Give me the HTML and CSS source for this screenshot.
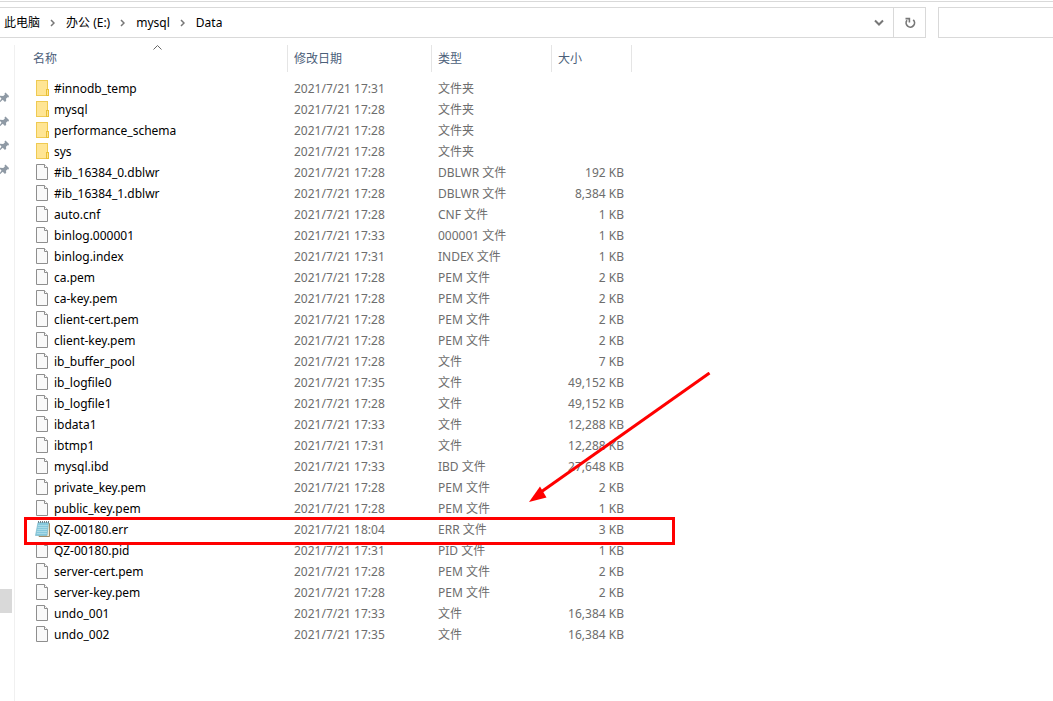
FILE: index.html
```html
<!DOCTYPE html>
<html lang="zh-CN">
<head>
<meta charset="utf-8">
<title>Data</title>
<link rel="stylesheet" href="styles.css">
</head>
<body>
<svg class="sprite" aria-hidden="true">
  <symbol id="folder" viewBox="0 0 15 16">
    <rect x="1.5" y="0.5" width="11" height="15" fill="#ffe594" stroke="#efca52"/>
    <rect x="11.5" y="9.500" width="2" height="6" fill="#ffe594" stroke="#e9c037"/>
  </symbol>
  <symbol id="file" viewBox="0 0 15 16">
    <path d="M1.500 0.500H9.500L12.500 3.500V15.500H1.500Z" fill="#f9f9f9" stroke="#8e8e8e"/>
    <path d="M9.500 0.500V3.500H12.500" fill="#fff" stroke="#8e8e8e"/>
  </symbol>
  <symbol id="notepad" viewBox="0 0 15 16">
    <path d="M5 2.500H14.500V15.500H4Z" fill="#f1ead6" stroke="#a08c68"/>
    <path d="M3 1.500H13.500L12 14.500H0.500Z" fill="#86c8dc" stroke="#7db9ca" stroke-width=".7"/>
    <path d="M3 4.500H12.800M2.700 6.500H12.500M2.400 8.500H12.200M2 10.500H12M1.700 12.500H11.700" stroke="#b4dfea" stroke-width=".8"/>
    <path d="M3.500 0V2M5.500 0V2M7.500 0V2M9.500 0V2M11.500 0V2M13.500 0V2" stroke="#71838b"/>
  </symbol>
  <symbol id="pin" viewBox="0 0 9 11">
    <path d="M5.500 0.500L9 4L8.500 5.500L7.500 5.200L6 6.700L6.200 8.700L5 10L2.700 7.700L0 10.300V8.700L1.500 6.500L0 5V3.700L3.200 4L4.900 2.500L4.500 1.500Z" fill="#8f9aa5"/>
  </symbol>
  <symbol id="chev" viewBox="0 0 5 8">
    <path d="M1 1L4 4L1 7" fill="none" stroke="#777" stroke-width="1.500"/>
  </symbol>
</svg>

<header class="toolbar">
  <nav class="address" aria-label="路径">
    <a class="crumb" href="#">此电脑</a><svg class="chev"><use href="#chev"/></svg>
    <a class="crumb" href="#">办公 (E:)</a><svg class="chev"><use href="#chev"/></svg>
    <a class="crumb" href="#">mysql</a><svg class="chev"><use href="#chev"/></svg>
    <a class="crumb" href="#">Data</a>
    <button class="drop" type="button" aria-label="历史记录"><svg width="10" height="7" viewBox="0 0 10 7"><path d="M1 1.500L5 5.500L9 1.500" fill="none" stroke="#777" stroke-width="2"/></svg></button>
    <button class="refresh" type="button" aria-label="刷新"><svg width="12" height="12" viewBox="0 0 12 12"><path d="M9.200 2.800A4.200 4.200 0 1 1 3 3.300" fill="none" stroke="#777" stroke-width="1.700"/><path d="M1.500 0.800H6.200V5.500H4.600V2.500H1.500Z" fill="#777"/></svg></button>
  </nav>
  <input class="search" type="search" aria-label="搜索">
</header>

<div class="body">
  <aside class="side">
    <svg class="pin"><use href="#pin"/></svg>
    <svg class="pin"><use href="#pin"/></svg>
    <svg class="pin"><use href="#pin"/></svg>
    <svg class="pin"><use href="#pin"/></svg>
    <div class="thumb"></div>
  </aside>
  <main class="files">
    <table class="list">
      <colgroup><col class="c-name"><col class="c-date"><col class="c-type"><col class="c-size"></colgroup>
      <thead>
        <tr><th class="first">名称<svg class="sort" viewBox="0 0 9 5"><path d="M0.500 4.500L4.500 0.500L8.500 4.500" fill="none" stroke="#666"/></svg></th><th>修改日期</th><th>类型</th><th>大小</th></tr>
      </thead>
      <tbody>
        <tr><td><svg class="ico"><use href="#folder"/></svg>#innodb_temp</td><td>2021/7/21 17:31</td><td>文件夹</td><td></td></tr>
        <tr><td><svg class="ico"><use href="#folder"/></svg>mysql</td><td>2021/7/21 17:28</td><td>文件夹</td><td></td></tr>
        <tr><td><svg class="ico"><use href="#folder"/></svg>performance_schema</td><td>2021/7/21 17:28</td><td>文件夹</td><td></td></tr>
        <tr><td><svg class="ico"><use href="#folder"/></svg>sys</td><td>2021/7/21 17:28</td><td>文件夹</td><td></td></tr>
        <tr><td><svg class="ico"><use href="#file"/></svg>#ib_16384_0.dblwr</td><td>2021/7/21 17:28</td><td>DBLWR 文件</td><td>192 KB</td></tr>
        <tr><td><svg class="ico"><use href="#file"/></svg>#ib_16384_1.dblwr</td><td>2021/7/21 17:28</td><td>DBLWR 文件</td><td>8,384 KB</td></tr>
        <tr><td><svg class="ico"><use href="#file"/></svg>auto.cnf</td><td>2021/7/21 17:28</td><td>CNF 文件</td><td>1 KB</td></tr>
        <tr><td><svg class="ico"><use href="#file"/></svg>binlog.000001</td><td>2021/7/21 17:33</td><td>000001 文件</td><td>1 KB</td></tr>
        <tr><td><svg class="ico"><use href="#file"/></svg>binlog.index</td><td>2021/7/21 17:31</td><td>INDEX 文件</td><td>1 KB</td></tr>
        <tr><td><svg class="ico"><use href="#file"/></svg>ca.pem</td><td>2021/7/21 17:28</td><td>PEM 文件</td><td>2 KB</td></tr>
        <tr><td><svg class="ico"><use href="#file"/></svg>ca-key.pem</td><td>2021/7/21 17:28</td><td>PEM 文件</td><td>2 KB</td></tr>
        <tr><td><svg class="ico"><use href="#file"/></svg>client-cert.pem</td><td>2021/7/21 17:28</td><td>PEM 文件</td><td>2 KB</td></tr>
        <tr><td><svg class="ico"><use href="#file"/></svg>client-key.pem</td><td>2021/7/21 17:28</td><td>PEM 文件</td><td>2 KB</td></tr>
        <tr><td><svg class="ico"><use href="#file"/></svg>ib_buffer_pool</td><td>2021/7/21 17:28</td><td>文件</td><td>7 KB</td></tr>
        <tr><td><svg class="ico"><use href="#file"/></svg>ib_logfile0</td><td>2021/7/21 17:35</td><td>文件</td><td>49,152 KB</td></tr>
        <tr><td><svg class="ico"><use href="#file"/></svg>ib_logfile1</td><td>2021/7/21 17:28</td><td>文件</td><td>49,152 KB</td></tr>
        <tr><td><svg class="ico"><use href="#file"/></svg>ibdata1</td><td>2021/7/21 17:33</td><td>文件</td><td>12,288 KB</td></tr>
        <tr><td><svg class="ico"><use href="#file"/></svg>ibtmp1</td><td>2021/7/21 17:31</td><td>文件</td><td>12,288 KB</td></tr>
        <tr><td><svg class="ico"><use href="#file"/></svg>mysql.ibd</td><td>2021/7/21 17:33</td><td>IBD 文件</td><td>27,648 KB</td></tr>
        <tr><td><svg class="ico"><use href="#file"/></svg>private_key.pem</td><td>2021/7/21 17:28</td><td>PEM 文件</td><td>2 KB</td></tr>
        <tr><td><svg class="ico"><use href="#file"/></svg>public_key.pem</td><td>2021/7/21 17:28</td><td>PEM 文件</td><td>1 KB</td></tr>
        <tr class="marked"><td><svg class="ico"><use href="#notepad"/></svg>QZ-00180.err<span class="frame"></span><svg class="arrow" viewBox="0 0 182 130"><path d="M180.500 1L12 120" stroke="#f00" stroke-width="3" fill="none"/><path d="M0 130L11 114.500L17.500 125.500Z" fill="#f00"/></svg></td><td>2021/7/21 18:04</td><td>ERR 文件</td><td>3 KB</td></tr>
        <tr><td><svg class="ico"><use href="#file"/></svg>QZ-00180.pid</td><td>2021/7/21 17:31</td><td>PID 文件</td><td>1 KB</td></tr>
        <tr><td><svg class="ico"><use href="#file"/></svg>server-cert.pem</td><td>2021/7/21 17:28</td><td>PEM 文件</td><td>2 KB</td></tr>
        <tr><td><svg class="ico"><use href="#file"/></svg>server-key.pem</td><td>2021/7/21 17:28</td><td>PEM 文件</td><td>2 KB</td></tr>
        <tr><td><svg class="ico"><use href="#file"/></svg>undo_001</td><td>2021/7/21 17:33</td><td>文件</td><td>16,384 KB</td></tr>
        <tr><td><svg class="ico"><use href="#file"/></svg>undo_002</td><td>2021/7/21 17:35</td><td>文件</td><td>16,384 KB</td></tr>
      </tbody>
    </table>
  </main>
</div>
</body>
</html>
```

FILE: styles.css
```css
* { box-sizing: border-box; }
body {
  margin: 0;
  min-height: 100vh;
  display: flex;
  flex-direction: column;
  background: #fff;
  color: #000;
  font: 12px/20px "Noto Sans", "Noto Sans CJK SC", sans-serif;
  overflow-x: hidden;
}
.sprite { position: absolute; width: 0; height: 0; }

.toolbar {
  display: flex;
  gap: 12px;
  margin-top: 1px;
  padding-top: 5px;
  border-top: 1px solid #d9d9d9;
}
.address {
  flex: 1;
  display: flex;
  align-items: center;
  height: 31px;
  padding-left: 4px;
  border: 1px solid #d9d9d9;
  border-left: 0;
}
.crumb { color: #000; text-decoration: none; white-space: nowrap; }
.chev { width: 5px; height: 8px; margin: 0 11px 0 10px; }
.address button {
  display: flex;
  align-items: center;
  justify-content: center;
  align-self: stretch;
  width: 28px;
  padding: 0;
  border: 0;
  background: none;
}
.address .drop { margin-left: auto; }
.address .refresh { width: 32px; border-left: 1px solid #d9d9d9; }
.search {
  width: 115px;
  height: 31px;
  padding: 0 8px;
  border: 1px solid #d9d9d9;
  border-right: 0;
  border-radius: 0;
  background: #fff;
  font: inherit;
  appearance: none;
}

.body { flex: 1; display: flex; margin-top: 7px; }
.side {
  width: 15px;
  padding-top: 47px;
  border-right: 1px solid #f0f0f0;
}
.pin { display: block; width: 9px; height: 11px; margin-bottom: 13px; }
.thumb { width: 12px; height: 24px; margin-top: 414px; background: #d9d9d9; }

.files { flex: 1; }
.list { width: 617px; table-layout: fixed; border-collapse: separate; border-spacing: 0; }
.c-name { width: 273px; }
.c-date { width: 144px; }
.c-type { width: 120px; }
.c-size { width: 80px; }
th {
  position: relative;
  height: 27px;
  padding: 0 6px;
  border-right: 1px solid #e5e5e5;
  color: #4c607a;
  font-weight: 400;
  text-align: left;
}
th.first { padding-left: 18px; }
.sort { position: absolute; top: 0; left: 138px; width: 9px; height: 5px; }
tbody::before { content: ""; display: table-row; height: 6px; }
td {
  height: 21px;
  padding: 0 6px;
  color: #6d6d6d;
  line-height: 20px;
  white-space: nowrap;
}
td:first-child { padding-left: 20px; color: #000; }
td:last-child { padding-right: 8px; text-align: right; }
.ico { width: 15px; height: 16px; margin: 0 4px 2px 0; vertical-align: middle; }

.marked { position: relative; }
.frame {
  position: absolute;
  top: -2px;
  bottom: -5px;
  left: 9px;
  right: -43px;
  border: 3px solid #f00;
}
.arrow { position: absolute; left: 514px; bottom: 38px; width: 182px; height: 130px; }
```
